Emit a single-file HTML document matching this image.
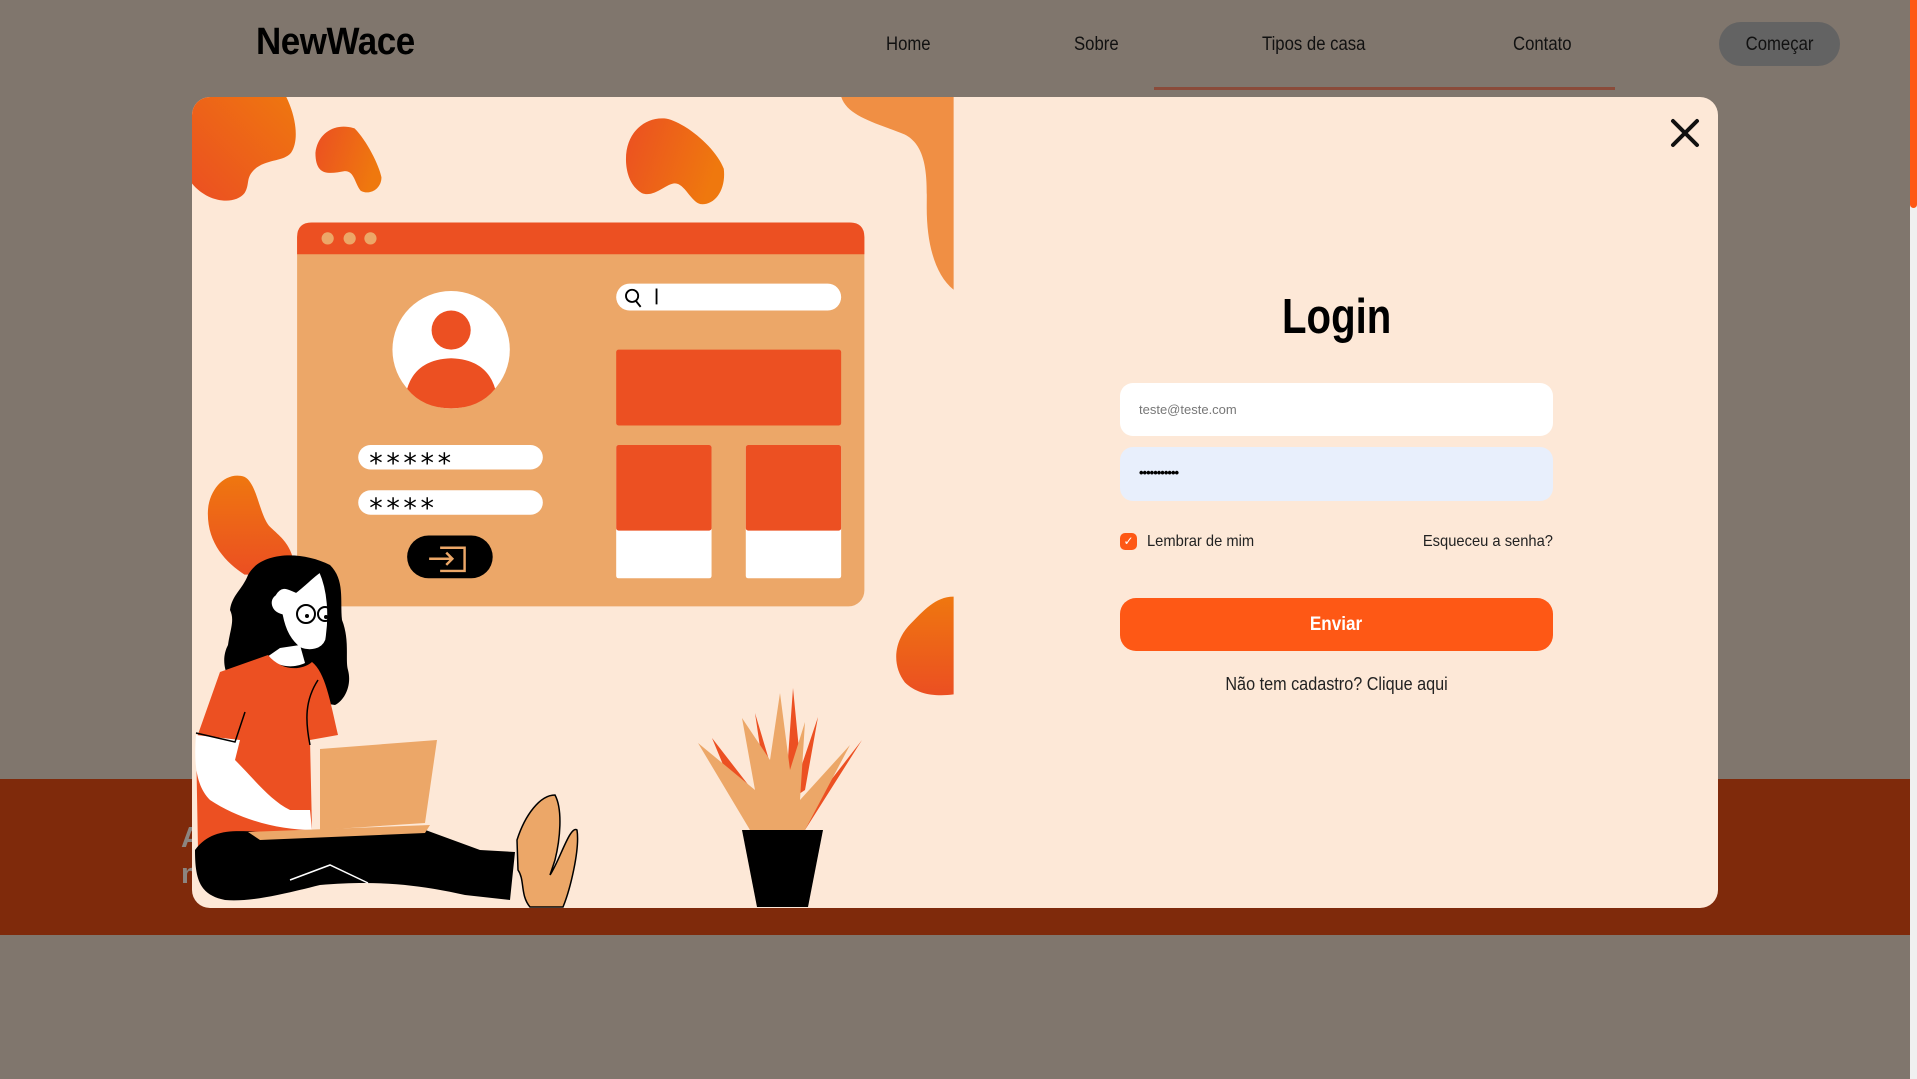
<!DOCTYPE html>
<html><head><meta charset="utf-8"><style>
*{margin:0;padding:0;box-sizing:border-box}
body{width:1917px;height:1079px;overflow:hidden;background:#80766d;font-family:"Liberation Sans Narrow","Liberation Sans",sans-serif;position:relative}
.abs{position:absolute}
.nav{font-size:19px;color:#111;top:34px;transform:scaleX(0.88);transform-origin:0 0}
</style></head><body>
<div class="abs" style="left:0;top:779px;width:1910px;height:156px;background:#7f2a0b"></div>
<div class="abs" style="left:181px;top:820px;font-size:29px;color:#8c8580;font-weight:bold;line-height:36px">A<br>n</div>
<div class="abs" style="left:1910px;top:0;width:7px;height:1079px;background:#f0f0f0"></div>
<div class="abs" style="left:1910px;top:0;width:7px;height:208px;background:#fe5815;border-radius:0 0 4px 4px"></div>

<div class="abs" style="left:256px;top:21px;font-size:38px;font-weight:bold;color:#000;letter-spacing:-0.5px;transform:scaleX(0.92);transform-origin:0 0">NewWace</div>
<div class="abs nav" style="left:886px">Home</div>
<div class="abs nav" style="left:1074px">Sobre</div>
<div class="abs nav" style="left:1262px">Tipos de casa</div>
<div class="abs nav" style="left:1513px">Contato</div>
<div class="abs" style="left:1719px;top:22px;width:121px;height:44px;background:#636363;border-radius:22px;font-size:19px;color:#111;text-align:center;line-height:46px"><span style="display:inline-block;transform:scaleX(0.88)">Começar</span></div>
<div class="abs" style="left:1154px;top:87px;width:461px;height:3px;background:#8a4b3a"></div>

<div class="abs" style="left:192px;top:97px;width:1526px;height:811px;background:#fde8d7;border-radius:18px;overflow:hidden">
<svg width="1526" height="811" viewBox="192 97 1526 811" style="position:absolute;left:0;top:0">
<defs>
<linearGradient id="g1" x1="0" y1="1" x2="1" y2="0"><stop offset="0" stop-color="#eb4f22"/><stop offset="1" stop-color="#ef770f"/></linearGradient>
<linearGradient id="g2" x1="0" y1="0" x2="1" y2="0.3"><stop offset="0" stop-color="#eb4f22"/><stop offset="1" stop-color="#ef780e"/></linearGradient>
<linearGradient id="g3" x1="0" y1="0" x2="0" y2="1"><stop offset="0" stop-color="#ef770f"/><stop offset="1" stop-color="#eb4f22"/></linearGradient>
</defs>
<g transform="scale(1.2226)">
<path d="M157 79 L234 79 C242 95 245 115 238 125 C232 132 220 130 210 137 C200 145 205 150 200 158 C192 168 170 166 157 150 Z" fill="url(#g1)"/>
<path d="M258 125 C260 108 275 100 290 105 C300 115 310 135 312 145 C312 155 302 160 295 156 C290 150 290 140 282 140 C270 142 258 145 258 125 Z" fill="url(#g2)"/>
<path d="M512 130 C512 108 528 95 545 97 C560 100 585 120 592 138 C594 155 585 168 573 167 C565 165 560 150 552 150 C545 150 535 162 525 158 C515 152 512 140 512 130 Z" fill="url(#g2)"/>
<path d="M688 79 L780 79 L780 237 C765 225 758 200 758 170 C758 150 760 120 740 110 C715 100 693 95 688 79 Z" fill="#f08f44"/>
<path d="M780 488 C765 488 755 500 745 510 C730 525 730 545 740 558 C750 568 765 570 780 568 Z" fill="url(#g3)"/>
<path d="M170 420 C170 400 185 385 200 390 C210 395 212 420 220 430 C230 440 240 445 242 470 L200 470 C185 460 170 445 170 420 Z" fill="url(#g3)"/>
<rect x="243" y="182" width="464" height="314" rx="13" fill="#eca768"/>
<path d="M243 208 L243 194 Q243 182 255 182 L695 182 Q707 182 707 194 L707 208 Z" fill="#ec5022"/>
<circle cx="268" cy="195" r="5" fill="#eca768"/><circle cx="286" cy="195" r="5" fill="#eca768"/><circle cx="303" cy="195" r="5" fill="#eca768"/>
<ellipse cx="369" cy="286" rx="48" ry="48" fill="#fff"/>
<ellipse cx="369" cy="270" rx="16" ry="16" fill="#ec5022"/>
<path d="M333 318 Q340 294 369 293 Q398 294 405 318 Q392 334 369 334 Q346 334 333 318 Z" fill="#ec5022"/>
<rect x="293" y="364" width="151" height="20" rx="10" fill="#fff"/>
<rect x="293" y="401" width="151" height="20" rx="10" fill="#fff"/>
<text x="302" y="386" font-family="DejaVu Sans,sans-serif" font-size="22" fill="#000" letter-spacing="3">*****</text>
<text x="302" y="423" font-family="DejaVu Sans,sans-serif" font-size="22" fill="#000" letter-spacing="3">****</text>
<rect x="333" y="438" width="70" height="35" rx="17.5" fill="#000"/>
<path d="M360 448 L380 448 L380 467 L360 467 M351 457 L370 457 M365 452 L370 457 L365 462" fill="none" stroke="#eca768" stroke-width="2"/>
<rect x="504" y="232" width="184" height="22" rx="11" fill="#fff"/>
<circle cx="517" cy="242" r="5" fill="none" stroke="#000" stroke-width="1.5"/><path d="M520 246 L524 251 M537 236 L537 249" stroke="#000" stroke-width="1.5"/>
<rect x="504" y="286" width="184" height="62" rx="2" fill="#ec5022"/>
<rect x="504" y="364" width="78" height="109" rx="2" fill="#fff"/><rect x="504" y="364" width="78" height="70" rx="2" fill="#ec5022"/>
<rect x="610" y="364" width="78" height="109" rx="2" fill="#fff"/><rect x="610" y="364" width="78" height="70" rx="2" fill="#ec5022"/>
</g>
<path d="M248 575 C260 552 300 550 330 565 C345 580 340 600 342 620 C350 640 345 660 348 670 C352 685 345 700 335 705 L240 690 C225 680 220 660 228 645 C230 630 235 620 230 610 C232 595 242 590 248 575 Z" fill="#000"/>
<path d="M275 595 C282 583 290 590 296 592 C305 585 315 575 320 572 C328 590 330 615 326 640 C322 650 310 652 300 648 C290 640 285 630 282 615 C270 612 268 600 275 595 Z" fill="#fff" stroke="#000" stroke-width="1.5"/>
<circle cx="306" cy="614" r="9" fill="none" stroke="#000" stroke-width="2"/><circle cx="325" cy="614" r="7" fill="none" stroke="#000" stroke-width="2"/>
<circle cx="307" cy="616" r="2" fill="#000"/><circle cx="326" cy="617" r="2" fill="#000"/>
<path d="M267 657 C275 665 290 670 305 663 L300 645 L280 648 Z" fill="#fff"/>
<path d="M220 672 L268 655 C280 670 300 672 312 662 C325 672 330 700 338 735 L310 740 L312 830 L198 850 L196 740 Z" fill="#ec5022"/>
<path d="M196 735 L240 740 L235 760 C255 780 270 800 290 810 L310 810 L312 830 C280 830 240 820 210 800 C195 785 194 760 196 735 Z" fill="#fff"/>
<path d="M310 745 C305 720 305 700 318 680 M196 733 L235 742 L245 712" fill="none" stroke="#000" stroke-width="1.5"/>
<path d="M195 850 C210 830 230 830 260 832 L420 828 L480 850 L515 852 L510 900 L465 895 C420 885 380 880 320 885 C280 895 250 902 225 900 C200 895 195 880 195 850 Z" fill="#000"/>
<path d="M290 880 L330 865 L368 883" fill="none" stroke="#fff" stroke-width="1.5"/>
<path d="M320 749 L437 740 L425 823 L320 830 Z" fill="#eca768"/>
<path d="M248 832 L430 825 L425 833 L260 840 Z" fill="#eca768"/>
<path d="M517 840 C525 815 540 795 555 795 C563 810 560 840 555 860 L550 875 C560 860 570 825 577 830 C580 850 570 890 563 907 L530 907 C520 895 525 880 518 870 Z" fill="#eca768" stroke="#000" stroke-width="1.5"/>
<path d="M742 830 L823 830 L808 907 L757 907 Z" fill="#000"/>
<path d="M712 738 L760 800 L750 830 Z M755 713 L775 780 L770 815 Z M793 688 L800 760 L785 800 Z M818 717 L805 790 L790 800 Z M862 740 L805 830 L800 820 Z" fill="#ec5022"/>
<path d="M698 743 L750 830 L805 830 L850 745 L800 800 L805 722 L790 770 L780 693 L770 760 L742 718 L755 790 Z" fill="#eca768"/>
</svg>
</div>

<svg class="abs" style="left:1670px;top:118px" width="30" height="30" viewBox="0 0 30 30"><path d="M3 3 L27 27 M27 3 L3 27" stroke="#111" stroke-width="4" stroke-linecap="round"/></svg>

<div class="abs" style="left:1120px;width:433px;top:289px;text-align:center;font-size:49px;font-weight:bold;color:#000"><span style="display:inline-block;transform:scaleX(0.82)">Login</span></div>
<div class="abs" style="left:1120px;top:383px;width:433px;height:53px;background:#fff;border-radius:13px;font-family:'Liberation Sans',sans-serif;font-size:13px;color:#777;padding-left:19px;line-height:53px">teste@teste.com</div>
<div class="abs" style="left:1120px;top:447px;width:433px;height:54px;background:#e8effc;border-radius:13px;font-family:'Liberation Sans',sans-serif;font-size:13px;color:#000;padding-left:19px;line-height:52px;font-weight:bold;letter-spacing:-1px">•••••••••••</div>
<div class="abs" style="left:1120px;top:533px;width:17px;height:17px;background:#fe5815;border-radius:5px;color:#fff;font-size:12px;text-align:center;line-height:17px;font-family:'DejaVu Sans',sans-serif">✓</div>
<div class="abs" style="left:1147px;top:533px;font-size:16px;color:#222;transform:scaleX(0.92);transform-origin:0 0">Lembrar de mim</div>
<div class="abs" style="left:1300px;width:253px;top:533px;font-size:16px;color:#222;text-align:right;transform:scaleX(0.92);transform-origin:100% 0">Esqueceu a senha?</div>
<div class="abs" style="left:1120px;top:598px;width:433px;height:53px;background:#fe5815;border-radius:16px;color:#fff;font-size:19px;font-weight:bold;text-align:center;line-height:54px"><span style="display:inline-block;transform:scaleX(0.9)">Enviar</span></div>
<div class="abs" style="left:1120px;width:433px;top:674px;text-align:center;font-size:18px;color:#222"><span style="display:inline-block;transform:scaleX(0.9)">Não tem cadastro? Clique aqui</span></div>
</body></html>
